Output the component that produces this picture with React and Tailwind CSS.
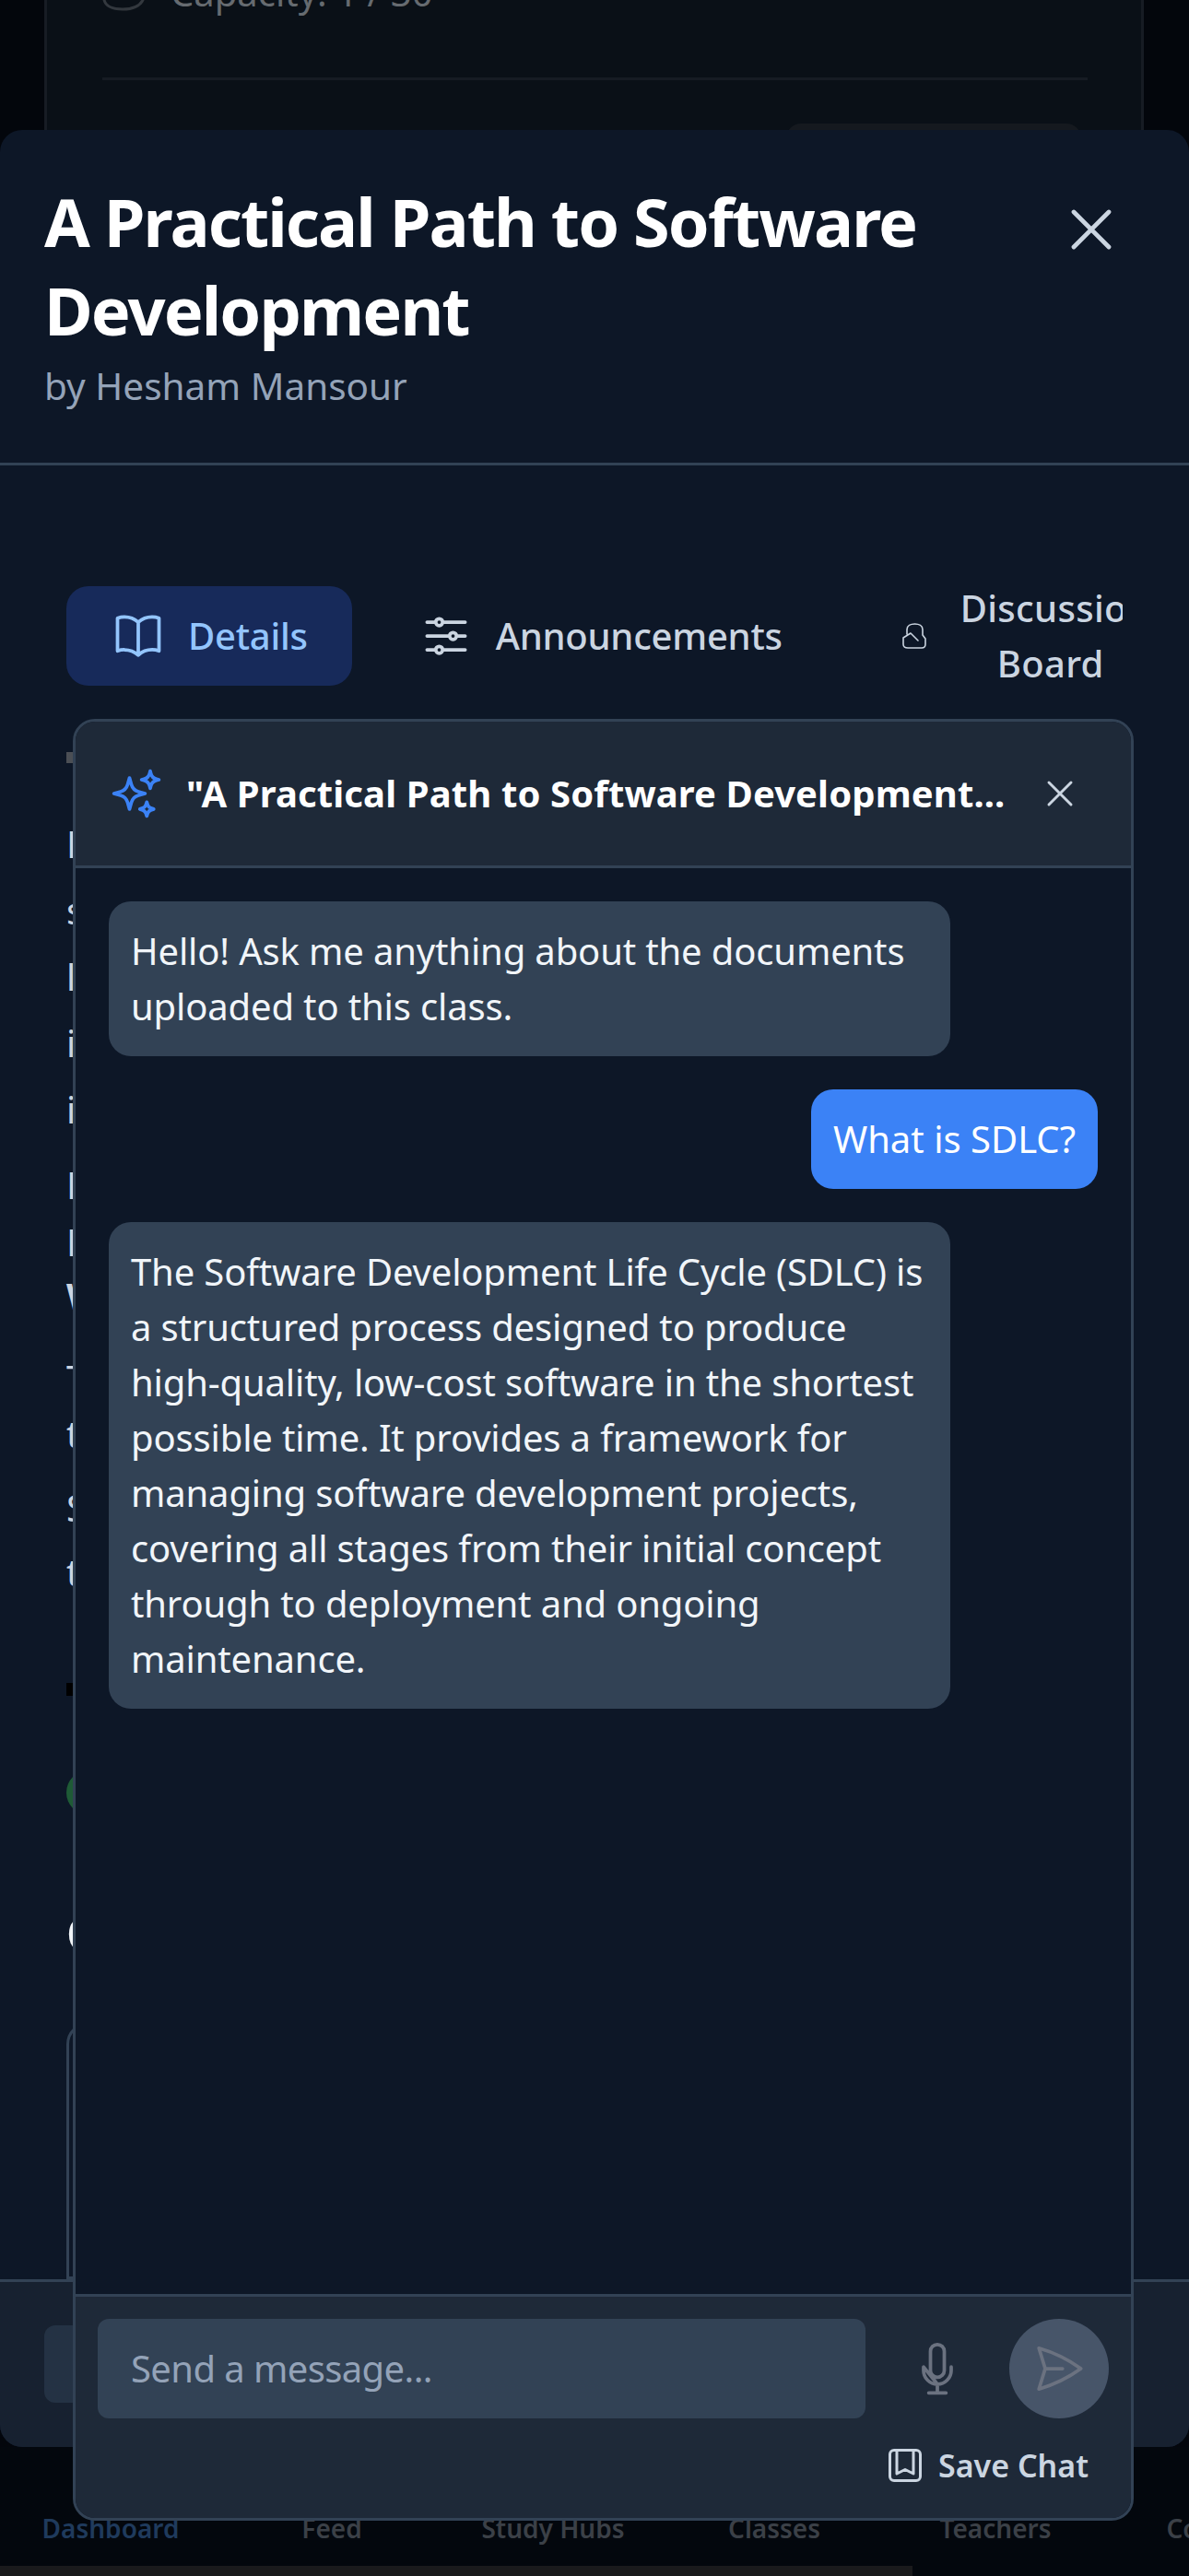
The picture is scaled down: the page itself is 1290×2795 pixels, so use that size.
const Icon = ({ d, className, sw = 1.5 }) => (
  <svg viewBox="0 0 24 24" fill="none" stroke="currentColor" strokeWidth={sw} strokeLinecap="round" strokeLinejoin="round" className={className}>
    <path d={d} />
  </svg>
)

const X_MARK = 'M6 18L18 6M6 6l12 12'
const BOOK = 'M12 6.042A8.967 8.967 0 006 3.75c-1.052 0-2.062.18-3 .512v14.25A8.987 8.987 0 016 18c2.305 0 4.408.867 6 2.292m0-14.25a8.966 8.966 0 016-2.292c1.052 0 2.062.18 3 .512v14.25A8.987 8.987 0 0018 18a8.967 8.967 0 00-6 2.292m0-14.25v14.25'
const SLIDERS = 'M10.5 6h9.75M10.5 6a1.5 1.5 0 11-3 0m3 0a1.5 1.5 0 10-3 0M3.75 6H7.5m3 12h9.75m-9.75 0a1.5 1.5 0 01-3 0m3 0a1.5 1.5 0 00-3 0m-3.75 0H7.5m9-6h3.75m-3.75 0a1.5 1.5 0 01-3 0m3 0a1.5 1.5 0 00-3 0m-9.75 0h9.75'
const SPARKLES = 'M9.813 15.904L9 18.75l-.813-2.846a4.5 4.5 0 00-3.09-3.09L2.25 12l2.846-.813a4.5 4.5 0 003.09-3.09L9 5.25l.813 2.846a4.5 4.5 0 003.09 3.09L15.75 12l-2.846.813a4.5 4.5 0 00-3.09 3.09zM18.259 8.715L18 9.75l-.259-1.035a3.375 3.375 0 00-2.455-2.456L14.25 6l1.036-.259a3.375 3.375 0 002.455-2.456L18 2.25l.259 1.035a3.375 3.375 0 002.456 2.456L21.75 6l-1.035.259a3.375 3.375 0 00-2.456 2.456zM16.894 20.567L16.5 21.75l-.394-1.183a2.25 2.25 0 00-1.423-1.423L13.5 18.75l1.183-.394a2.25 2.25 0 001.423-1.423l.394-1.183.394 1.183a2.25 2.25 0 001.423 1.423l1.183.394-1.183.394a2.25 2.25 0 00-1.423 1.423z'
const MIC = 'M12 18.75a6 6 0 006-6v-1.5m-12 0v1.5a6 6 0 006 6zM12 18.75v3.75m-3.75 0h7.5M12 15.75a3 3 0 01-3-3V4.5a3 3 0 116 0v8.25a3 3 0 01-3 3z'
const SEND = 'M6 12L3.269 3.126A59.768 59.768 0 0121.485 12 59.77 59.77 0 013.27 20.876L5.999 12zm0 0h7.5'
const SAVE = 'M16.5 3.75V16.5L12 14.25 7.5 16.5V3.75m9 0H18A2.25 2.25 0 0120.25 6v12A2.25 2.25 0 0118 20.25H6A2.25 2.25 0 013.75 18V6A2.25 2.25 0 016 3.75h1.5m9 0h-9'

const NAV = ['Dashboard', 'Feed', 'Study Hubs', 'Classes', 'Teachers', 'Courses']

// first letters of the class description, the chat panel covers the rest
const LINES = [
  { t: 'Description of the class', h: 'h-[118px]' },
  { t: 'software development', h: 'h-[72px]' },
  { t: 'lifecycle and practice', h: 'h-[72px]' },
  { t: 'in real projects', h: 'h-[72px]' },
  { t: 'in modern teams', h: 'h-[72px]' },
  { t: 'Level: beginner', h: 'h-[82px]' },
  { t: 'Language: English', h: 'h-[62px]' },
  { t: 'What you will learn', h: 'h-[58px]', bold: true },
  { t: 'Tools and habits', h: 'h-[90px]' },
  { t: 'to build software', h: 'h-[60px]' },
  { t: 'Steps from idea', h: 'h-[80px]' },
  { t: 'to release', h: 'h-[70px]' },
]

function Bubble({ mine, children }) {
  if (mine) {
    return <div className="self-end rounded-3xl bg-[#3b82f6] p-6 text-[40px] leading-[60px] text-white">{children}</div>
  }
  return <div className="w-[913px] rounded-3xl bg-[#324255] p-6 text-[40px] leading-[60px] tracking-[-0.15px] text-[#f1f5f9]">{children}</div>
}

function ChatPanel() {
  return (
    <div className="absolute left-[79px] top-[780px] flex h-[1955px] w-[1151px] flex-col overflow-hidden rounded-3xl border-[3px] border-[#324255] bg-[#0d1727]">
      <div className="flex h-[159px] shrink-0 items-center border-b-[3px] border-[#324255] bg-[#1e2938] pl-9 pr-[35px]">
        <Icon d={SPARKLES} className="mr-6 h-[60px] w-[60px] shrink-0 text-[#3b82f6]" />
        <div className="w-[900px] shrink-0 truncate text-[40px] font-bold leading-[60px] tracking-[0.12px] text-white">"A Practical Path to Software Development...</div>
        <button className="ml-auto p-[18px] text-[#cbd5e1]">
          <Icon d={X_MARK} className="h-12 w-12" />
        </button>
      </div>

      <div className="flex flex-1 flex-col gap-9 p-9">
        <Bubble>Hello! Ask me anything about the documents uploaded to this class.</Bubble>
        <Bubble mine>What is SDLC?</Bubble>
        <Bubble>
          The Software Development Life Cycle (SDLC) is a structured process designed to produce high-quality, low-cost software in the shortest possible time. It provides a framework for managing software development projects, covering all stages from their initial concept through to deployment and ongoing maintenance.
        </Bubble>
      </div>

      <div className="shrink-0 border-t-[3px] border-[#324255] bg-[#1e2938] p-6">
        <div className="flex items-center gap-6">
          <div className="flex h-[108px] w-[833px] items-center rounded-xl bg-[#324255] px-9 text-[40px] tracking-[-0.6px] text-[#94a3b8]">Send a message...</div>
          <button className="p-6 text-[#6b7280]">
            <Icon d={MIC} className="h-[60px] w-[60px]" />
          </button>
          <button className="flex h-[108px] w-[108px] items-center justify-center rounded-full bg-[#475569] text-[#6b7280]">
            <Icon d={SEND} className="h-[60px] w-[60px]" />
          </button>
        </div>
        <div className="mt-3 flex justify-end pr-[22px]">
          <button className="flex items-center gap-3 pb-[9px] pt-[15px] text-[34px] font-semibold leading-[48px] text-[#cbd5e1]">
            <Icon d={SAVE} className="h-12 w-12" />
            Save Chat
          </button>
        </div>
      </div>
    </div>
  )
}

function ClassModal() {
  return (
    <div className="absolute left-0 top-[141px] flex h-[2514px] w-[1290px] flex-col overflow-hidden rounded-3xl bg-[#0d1727]">
      <div className="flex h-[364px] shrink-0 items-start justify-between border-b-[3px] border-[#324255] pl-12 pr-[68px] pt-[51px]">
        <div className="w-[1040px]">
          <h1 className="text-[72px] font-bold leading-[96px] tracking-[-1.9px] text-white">A Practical Path to Software Development</h1>
          <p className="mt-[5px] text-[40.5px] leading-[60px] text-[#94a3b8]">by Hesham Mansour</p>
        </div>
        <button className="mt-[19px] text-[#cbd5e1]">
          <Icon d={X_MARK} className="h-[76px] w-[76px]" />
        </button>
      </div>

      <div className="flex min-h-0 flex-1 flex-col pl-[72px] pr-[72px] pt-[131px]">
        <div className="flex h-[108px] shrink-0 items-center gap-6 overflow-hidden text-[40px] font-medium leading-[60px] tracking-[-0.25px] text-[#cbd5e1]">
          <div className="flex h-[108px] shrink-0 items-center gap-6 rounded-3xl bg-[#172a5a] px-12 text-[#93c5fd]">
            <Icon d={BOOK} className="h-[60px] w-[60px]" />
            Details
          </div>
          <div className="flex h-[108px] shrink-0 items-center gap-6 px-12">
            <Icon d={SLIDERS} className="h-[60px] w-[60px]" />
            Announcements
          </div>
          <div className="flex h-[108px] shrink-0 items-center gap-9 pl-[58px]">
            <svg viewBox="0 0 27 28" fill="none" stroke="currentColor" strokeWidth="1.6" strokeLinecap="round" strokeLinejoin="round" className="h-[28px] w-[27px] shrink-0">
              <path d="M5 12V7C5 3 9 1 13.5 1S22 3 22 7v6l3 4v6c0 3-2 4-4 4H6c-3 0-5-1-5-4v-7l8-5 8 8" />
            </svg>
            <div className="w-[196px] text-center tracking-[0.3px]">Discussion Board</div>
          </div>
        </div>

        <div className="mt-[72px] h-3 w-2 shrink-0 bg-[#4b4f55]" />
        {LINES.map((l) => (
          <div key={l.t} className={`flex shrink-0 items-end whitespace-nowrap text-[40px] leading-[60px] text-[#cbd5e1] ${l.h} ${l.bold ? 'font-bold' : ''}`}>
            {l.t}
          </div>
        ))}
        <div className="mt-[90px] h-[14px] w-2 shrink-0 bg-black" />
        <div className="mt-[81px] h-12 w-12 shrink-0 rounded-full bg-[#1e5b36]" />
        <div className="mt-[92px] shrink-0 text-[52px] font-bold leading-[72px] text-[#f1f5f9]">Class files</div>
        <div className="mt-[61px] h-[279px] shrink-0 rounded-t-3xl border-[3px] border-[#324255] bg-[#0d1727]" />
      </div>

      <div className="h-[182px] shrink-0 border-t-[3px] border-[#324255] bg-[#172130] pl-12 pt-[47px]">
        <div className="h-[84px] w-[300px] rounded-xl bg-[#243244]" />
      </div>
    </div>
  )
}

export default function App() {
  return (
    <div className="relative h-[2795px] w-[1290px] overflow-hidden bg-[#03060c] font-['Noto_Sans','Open_Sans',sans-serif]">
      <div className="ml-12 flex h-[160px] w-[1193px] flex-col border-x-[3px] border-[#171c24] bg-[#0a1017] pl-[60px] pr-[58px]">
        <div className="-mt-[38px] flex items-center gap-[26px] text-[40px] leading-[60px] text-[#666b70]">
          <Icon d="M1 16c1 4 6 5 10 5s9-1 11-5M15 14.5c1-1 3-1 4 0" className="h-12 w-12 text-[#33383e]" />
          Capacity: 1 / 30
        </div>
        <div className="mt-[62px] h-[3px] shrink-0 bg-[#161b23]" />
        <div className="ml-[742px] mt-[47px] h-[40px] w-[320px] shrink-0 rounded-2xl bg-[#15191f]" />
      </div>

      <ClassModal />

      <div className="absolute bottom-0 left-0 h-[140px] w-[1290px] bg-[#03070d]">
        <div className="flex h-[129px] items-end pb-[20px]">
          {NAV.map((n, i) => (
            <div key={n} className={`w-[240px] shrink-0 text-center text-[28px] font-semibold leading-[42px] ${i === 0 ? 'text-[#1f3a5c]' : 'text-[#3b4047]'}`}>
              {n}
            </div>
          ))}
        </div>
        <div className="h-[11px] w-[990px] bg-[#1a1a1c]" />
      </div>

      <ChatPanel />
    </div>
  )
}
